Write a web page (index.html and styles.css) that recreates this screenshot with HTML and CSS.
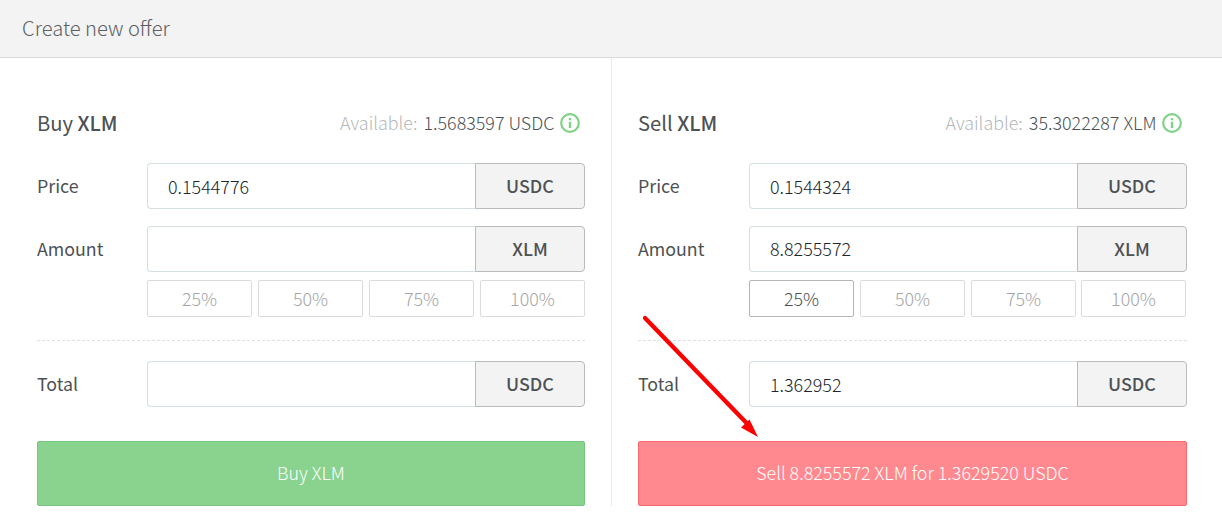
FILE: index.html
```html
<!DOCTYPE html>
<html lang="en">
<head>
<meta charset="utf-8">
<title>Create new offer</title>
<link rel="stylesheet" href="styles.css">
</head>
<body>
<header class="head"><h1 class="head-title">Create new offer</h1></header>
<main class="offers">
  <section class="offer buy">
    <div class="offer-head">
      <h2 class="offer-title">Buy <b>XLM</b></h2>
      <div class="avail"><span class="avail-label">Available:</span><span class="avail-value">1.5683597 USDC</span>
        <svg class="info" viewBox="0 0 20 20"><circle cx="10" cy="10" r="8.8"/><path d="M8.8 5h2.4v2.2H8.8zM8.8 8.8h2.4V15H8.8z"/></svg></div>
    </div>
    <div class="row"><label class="label">Price</label><div class="field"><span class="value">0.1544776</span><span class="unit">USDC</span></div></div>
    <div class="row"><label class="label">Amount</label><div class="field"><span class="value"></span><span class="unit">XLM</span></div></div>
    <div class="percents"><button class="pct">25%</button><button class="pct">50%</button><button class="pct">75%</button><button class="pct">100%</button></div>
    <div class="rule"><span class="dash"></span><span class="dash"></span></div>
    <div class="row"><label class="label">Total</label><div class="field"><span class="value"></span><span class="unit">USDC</span></div></div>
    <button class="submit submit-buy">Buy XLM</button>
  </section>
  <section class="offer sell">
    <div class="offer-head">
      <h2 class="offer-title">Sell <b>XLM</b></h2>
      <div class="avail"><span class="avail-label">Available:</span><span class="avail-value">35.3022287 XLM</span>
        <svg class="info" viewBox="0 0 20 20"><circle cx="10" cy="10" r="8.8"/><path d="M8.8 5h2.4v2.2H8.8zM8.8 8.8h2.4V15H8.8z"/></svg></div>
    </div>
    <div class="row"><label class="label">Price</label><div class="field"><span class="value">0.1544324</span><span class="unit">USDC</span></div></div>
    <div class="row"><label class="label">Amount</label><div class="field"><span class="value value-amount">8.8255572</span><span class="unit">XLM</span></div></div>
    <div class="percents"><button class="pct active">25%</button><button class="pct">50%</button><button class="pct">75%</button><button class="pct">100%</button></div>
    <div class="rule"><span class="dash"></span><span class="dash"></span></div>
    <div class="row"><label class="label">Total</label><div class="field"><span class="value">1.362952</span><span class="unit">USDC</span></div></div>
    <button class="submit submit-sell">Sell 8.8255572 XLM for 1.3629520 USDC</button>
  </section>
</main>
<svg class="arrow" viewBox="0 0 122 126"><path class="shaft" d="M5 8L107 113.500"/><path class="tip" d="M118 127L101 117.500L109.500 109.500Z"/></svg>
</body>
</html>
```
FILE: styles.css
```css
* { box-sizing: border-box; }
body {
  margin: 0;
  background: #fff;
  color: #4d5154;
  font: 400 17.9px/24px "Noto Sans CJK SC", "Open Sans", sans-serif;
  height: 531px;
  overflow: hidden;
}
h1, h2 { margin: 0; }
b { font-weight: 500; }
.head {
  height: 58px;
  padding: 0 22px;
  background: #f3f3f3;
  border-bottom: 1px solid #dcdcdc;
}
.head-title { font-size: 20.15px; font-weight: 300; line-height: 55px; color: #5c6064; }
.offers { display: grid; grid-template-columns: 612px 610px; height: 448px; }
.buy { padding: 0 26px 0 37px; border-right: 1px solid #ececec; }
.sell { padding: 0 35px 0 26px; }
.offer-head { display: flex; justify-content: space-between; align-items: center; height: 105px; padding: 25px 5px 1px 0; }
.offer-title { font-size: 20.2px; font-weight: 400; }
.avail { display: flex; align-items: center; font-weight: 300; }
.avail-label, .avail-value { padding-bottom: 2px; }
.avail-label { color: #b5b7b8; margin-right: 6px; }
.info { width: 20px; height: 20px; margin-left: 5.5px; fill: #80d287; }
.info circle { fill: none; stroke: #80d287; stroke-width: 2.2; }
.row { display: grid; grid-template-columns: 1fr 438px; align-items: center; height: 46px; margin-bottom: 17px; }
.label { color: #4d5154; font-size: 17.8px; padding-bottom: 2px; }
.field { display: flex; height: 46px; }
.value {
  flex: 1;
  padding: 0 20px;
  border: 1px solid #d6dfe3;
  border-right: 0;
  border-radius: 4px 0 0 4px;
  color: #20262b;
  font-weight: 300;
  line-height: 44px;
}
.value-amount { line-height: 42px; }
.unit {
  width: 110px;
  border: 1px solid #b9bbbc;
  border-radius: 0 4px 4px 0;
  background: #f3f3f3;
  font-weight: 500;
  line-height: 42px;
  text-align: center;
}
.percents { display: grid; grid-template-columns: repeat(4, 105px); gap: 6px; justify-content: end; height: 37px; margin-top: -9px; }
.sell .pct:last-child { margin: 0 1px 0 -1px; }
.pct, .submit { font: inherit; font-weight: 300; padding: 0; }
.pct { background: #fff; border: 1px solid #dadcdc; border-radius: 2px; color: #a4a6a7; padding-bottom: 2px; }
.pct.active { border-color: #b3b5b6; color: #4d5154; }
.rule { display: grid; grid-template-columns: 1fr 438px; height: 1px; margin: 23px 0 20px; }
.dash { background: repeating-linear-gradient(90deg, #dce2e2 0 3px, transparent 3px 5px); }
.submit { width: 100%; height: 65px; margin-top: 17px; padding-bottom: 4px; border: 1px solid; border-radius: 2px; color: #fff; }
.submit-buy { background: #89d38f; border-color: #76c57d; }
.submit-sell { background: #ff898f; border-color: #f9686f; }
.arrow { position: absolute; left: 640px; top: 310px; width: 122px; height: 126px; overflow: visible; }
.shaft { stroke: #f00; stroke-width: 4.3; stroke-linecap: round; fill: none; }
.tip { fill: #f00; }
```
